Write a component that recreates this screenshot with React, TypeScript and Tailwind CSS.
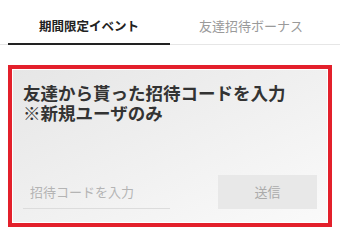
import { useState } from 'react';

const App = () => {
  const [tab, setTab] = useState(0);
  const [code, setCode] = useState('');

  const tabs = ['期間限定イベント', '友達招待ボーナス'];

  return (
    <div className="w-[340px] h-[240px] bg-white font-['Noto_Sans_CJK_JP',sans-serif] overflow-hidden">
      {/* Tabs */}
      <div className="px-2 border-b border-[#e6e6e6] flex h-[45px]">
        {tabs.map((t, i) => (
          <button
            key={t}
            onClick={() => setTab(i)}
            className={
              i === tab
                ? 'flex-1 flex items-center justify-center pt-[9px] text-[12.5px] font-bold text-[#222] border-b-2 border-[#222] -mb-px'
                : 'flex-1 flex items-center justify-center pt-[9px] text-[13px] text-[#9a9a9a] border-b-2 border-transparent -mb-px'
            }
          >
            {t}
          </button>
        ))}
      </div>

      {/* Invite card */}
      <div className="mx-2 mt-5 border-4 border-[#e3202b]">
        <div className="h-[154px] border border-white bg-gradient-to-br from-[#e6e6e6] to-[#fafafa] px-[10px] pt-[13px] flex flex-col">
          <p className="text-[17.5px] leading-[20px] font-bold text-[#333]">友達から貰った招待コードを入力</p>
          <p className="text-[17.5px] leading-[20px] font-bold text-[#333]">※新規ユーザのみ</p>
          <div className="mt-auto mb-[13px] flex items-end justify-between">
            <input
              value={code}
              onChange={(e) => setCode(e.target.value)}
              placeholder="招待コードを入力"
              className="w-[147px] h-[34px] bg-transparent border-b border-[#dcdcdc] px-[7px] text-[13px] text-[#333] placeholder:text-[#b4b4b4] outline-none"
            />
            <button className="w-[99px] h-[34px] bg-[#e8e8e8] text-[13px] text-[#ababab]">送信</button>
          </div>
        </div>
      </div>
    </div>
  );
};

export default App;
